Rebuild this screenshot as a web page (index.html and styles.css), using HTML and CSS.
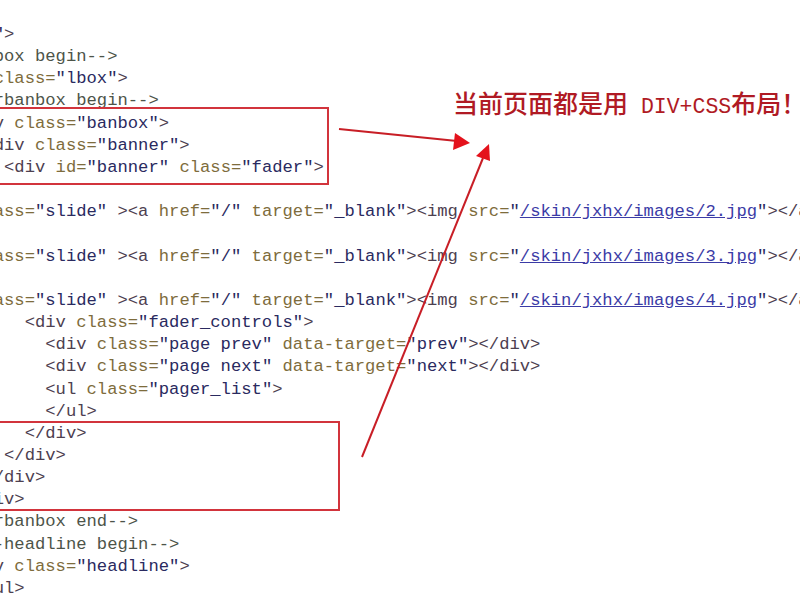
FILE: index.html
```html
<!DOCTYPE html>
<html lang="zh-CN">
<head>
<meta charset="utf-8">
<title>view-source</title>
<link rel="stylesheet" href="styles.css">
</head>
<body>
<pre class="code"><span class="t">   &lt;div </span><span class="n">class=</span><span class="v">"main"</span><span class="t">&gt;</span>
<span class="c">              &lt;!--lbox begin--&gt;</span>
<span class="t">              &lt;div </span><span class="n">class=</span><span class="v">"lbox"</span><span class="t">&gt;</span>
<span class="c">               &lt;!--rbanbox begin--&gt;</span>
<span class="t">                &lt;div </span><span class="n">class=</span><span class="v">"banbox"</span><span class="t">&gt;</span>
<span class="t">                  &lt;div </span><span class="n">class=</span><span class="v">"banner"</span><span class="t">&gt;</span>
<span class="t">                    &lt;div </span><span class="n">id=</span><span class="v">"banner"</span> <span class="n">class=</span><span class="v">"fader"</span><span class="t">&gt;</span>

<span class="t">            &lt;div </span><span class="n">class=</span><span class="v">"slide"</span> <span class="t">&gt;&lt;a </span><span class="n">href=</span><span class="v">"/"</span> <span class="n">target=</span><span class="v">"_blank"</span><span class="t">&gt;&lt;img </span><span class="n">src=</span><span class="v">"</span><span class="l">/skin/jxhx/images/2.jpg</span><span class="v">"</span><span class="t">&gt;&lt;/a&gt;&lt;/div&gt;</span>

<span class="t">            &lt;div </span><span class="n">class=</span><span class="v">"slide"</span> <span class="t">&gt;&lt;a </span><span class="n">href=</span><span class="v">"/"</span> <span class="n">target=</span><span class="v">"_blank"</span><span class="t">&gt;&lt;img </span><span class="n">src=</span><span class="v">"</span><span class="l">/skin/jxhx/images/3.jpg</span><span class="v">"</span><span class="t">&gt;&lt;/a&gt;&lt;/div&gt;</span>

<span class="t">            &lt;div </span><span class="n">class=</span><span class="v">"slide"</span> <span class="t">&gt;&lt;a </span><span class="n">href=</span><span class="v">"/"</span> <span class="n">target=</span><span class="v">"_blank"</span><span class="t">&gt;&lt;img </span><span class="n">src=</span><span class="v">"</span><span class="l">/skin/jxhx/images/4.jpg</span><span class="v">"</span><span class="t">&gt;&lt;/a&gt;&lt;/div&gt;</span>
<span class="t">                      &lt;div </span><span class="n">class=</span><span class="v">"fader_controls"</span><span class="t">&gt;</span>
<span class="t">                        &lt;div </span><span class="n">class=</span><span class="v">"page prev"</span> <span class="n">data-target=</span><span class="v">"prev"</span><span class="t">&gt;&lt;/div&gt;</span>
<span class="t">                        &lt;div </span><span class="n">class=</span><span class="v">"page next"</span> <span class="n">data-target=</span><span class="v">"next"</span><span class="t">&gt;&lt;/div&gt;</span>
<span class="t">                        &lt;ul </span><span class="n">class=</span><span class="v">"pager_list"</span><span class="t">&gt;</span>
<span class="t">                        &lt;/ul&gt;</span>
<span class="t">                      &lt;/div&gt;</span>
<span class="t">                    &lt;/div&gt;</span>
<span class="t">                  &lt;/div&gt;</span>
<span class="t">                &lt;/div&gt;</span>
<span class="c">               &lt;!--rbanbox end--&gt;</span>
<span class="c">                &lt;!--headline begin--&gt;</span>
<span class="t">                &lt;div </span><span class="n">class=</span><span class="v">"headline"</span><span class="t">&gt;</span>
<span class="t">                  &lt;ul&gt;</span></pre>

<svg class="marks" width="800" height="600" viewBox="0 0 800 600" aria-hidden="true">
  <rect x="-10" y="108" width="338" height="76" fill="none" stroke="#d2343c" stroke-width="2"/>
  <rect x="-10" y="422" width="349" height="88" fill="none" stroke="#d2343c" stroke-width="2"/>
  <line x1="339" y1="129" x2="457" y2="141" stroke="#c81e26" stroke-width="2"/>
  <polygon points="470,143 455,133 453,150" fill="#e4121c"/>
  <line x1="362" y1="457" x2="483" y2="158" stroke="#c81e26" stroke-width="2"/>
  <polygon points="489,144 490,161 476,156" fill="#e4121c"/>
</svg>

<div class="note">当前页面都是用<span class="latin"> DIV+CSS</span>布局！</div>
</body>
</html>
```

FILE: styles.css
```css
html, body {
  margin: 0;
  padding: 0;
}

body {
  width: 800px;
  height: 600px;
  overflow: hidden;
  position: relative;
  background: #ffffff;
}

.code {
  margin: 0;
  padding-top: 24px;
  margin-left: calc(4px - 20ch);
  font-family: "Liberation Mono", "DejaVu Sans Mono", monospace;
  font-size: 17.2px;
  line-height: 22.16px;
  color: #555555;
  white-space: pre;
}

.t { color: #4d4050; }
.n { color: #7e6c3c; }
.v { color: #2a2a60; }
.c { color: #4d5449; }
.l {
  color: #3b3ba6;
  text-decoration: underline;
}

.marks {
  position: absolute;
  left: 0;
  top: 0;
  pointer-events: none;
}

.note {
  position: absolute;
  left: 453px;
  top: 89px;
  font-family: "Noto Sans CJK SC", "Noto Sans CJK JP", sans-serif;
  font-size: 25px;
  font-weight: 500;
  line-height: 26px;
  color: #b01a24;
  white-space: nowrap;
}

.note .latin {
  font-family: "Liberation Mono", monospace;
  font-size: 21.5px;
  font-weight: 400;
}
```
